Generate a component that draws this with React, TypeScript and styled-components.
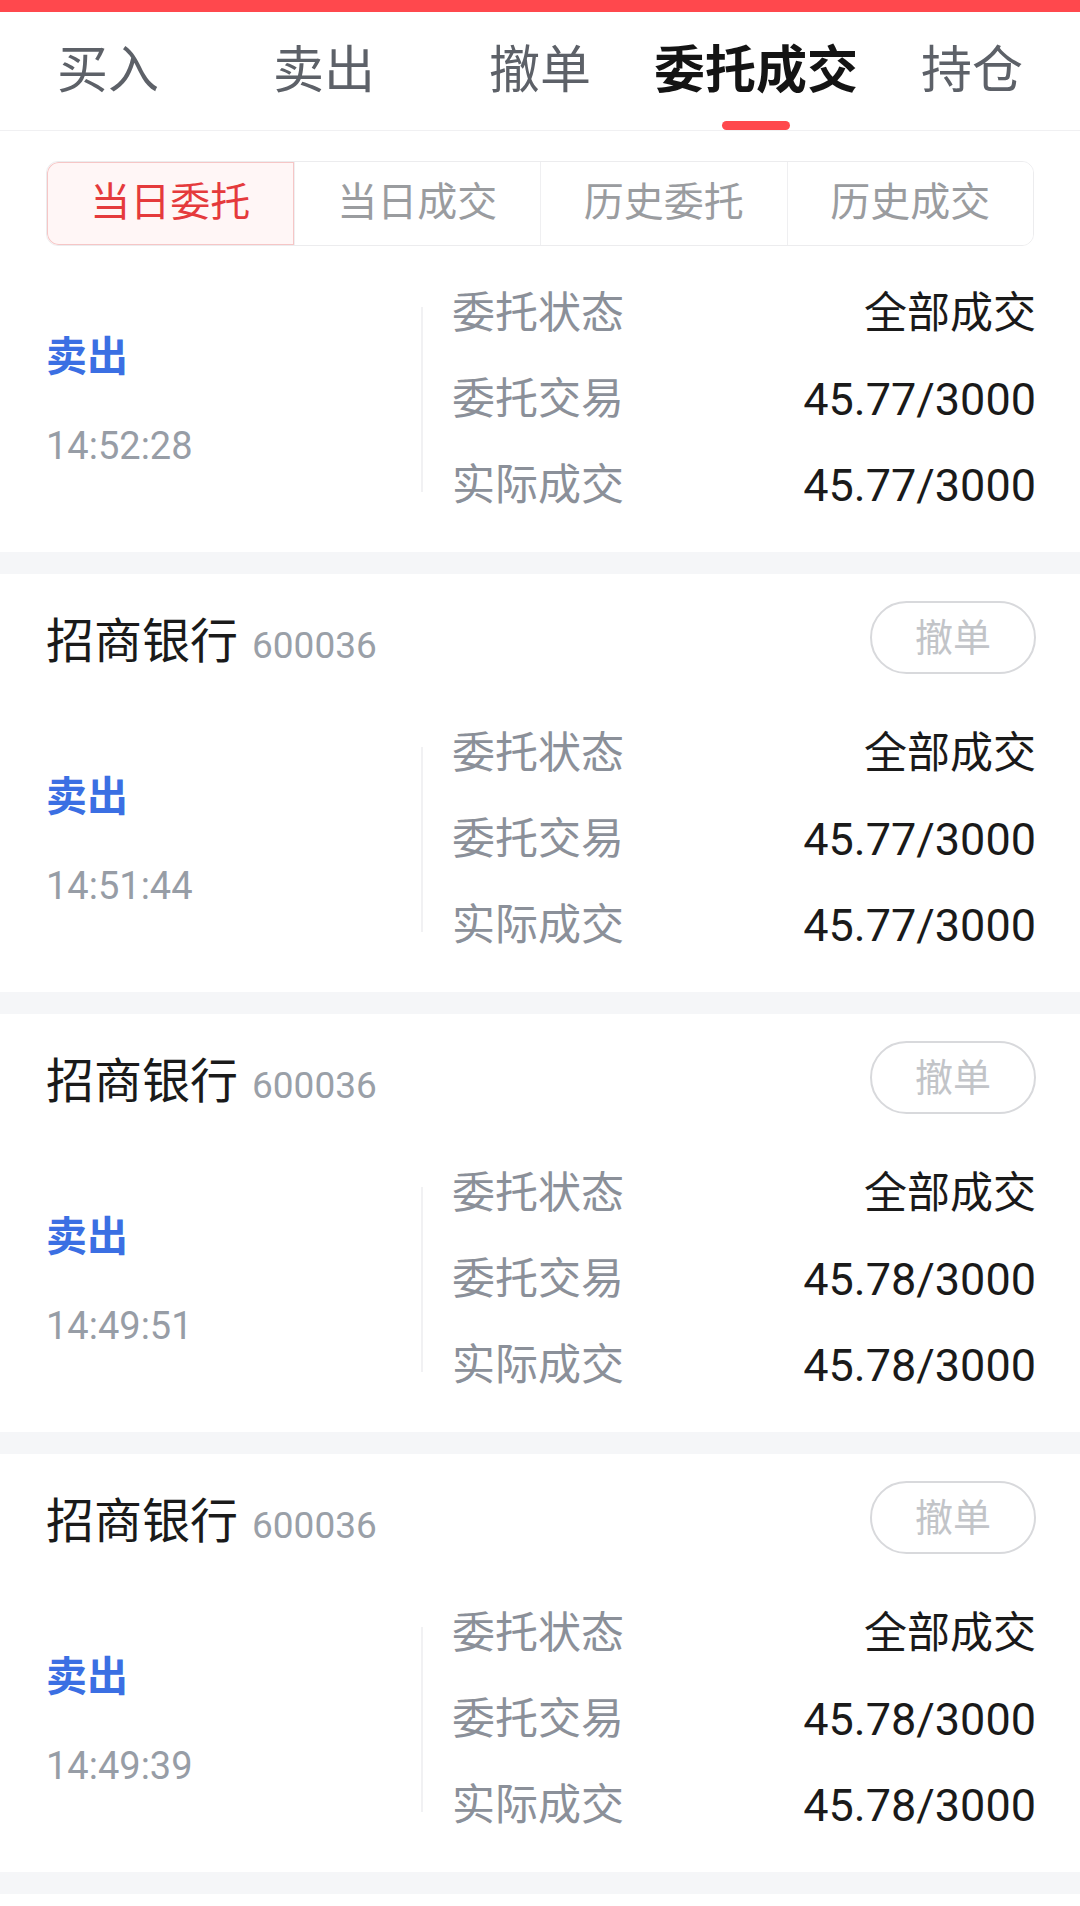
import React, { useState } from "react";
import styled, { createGlobalStyle } from "styled-components";

const GlobalStyle = createGlobalStyle`
  *, *::before, *::after {
    box-sizing: border-box;
  }
  html, body {
    margin: 0;
    padding: 0;
    background: #ffffff;
  }
  body {
    font-family: "Noto Sans CJK SC", Roboto, sans-serif;
    color: #1a1a1a;
    -webkit-font-smoothing: antialiased;
  }
`;

const Page = styled.div`
  width: 1080px;
  background: #f5f6f8;
  overflow: hidden;
`;

const TopStrip = styled.div`
  height: 12px;
  background: #ff484d;
`;

const TabBar = styled.div`
  display: grid;
  grid-template-columns: repeat(5, 1fr);
  height: 119px;
  background: #fff;
  border-bottom: 1px solid #f0f0f2;
`;

const Tab = styled.div<{ $active?: boolean }>`
  position: relative;
  display: flex;
  align-items: center;
  justify-content: center;
  padding-bottom: 10px;
  font-size: 51px;
  font-weight: ${(p) => (p.$active ? 600 : 400)};
  color: ${(p) => (p.$active ? "#141414" : "#5d6168")};
  cursor: pointer;
`;

const Indicator = styled.span`
  position: absolute;
  bottom: 0;
  left: 50%;
  width: 68px;
  height: 9px;
  margin-left: -34px;
  border-radius: 5px;
  background: #ff484d;
`;

const FilterWrap = styled.div`
  background: #fff;
  padding: 30px 46px 0;
`;

const Segmented = styled.div`
  display: grid;
  grid-template-columns: repeat(4, 1fr);
  height: 85px;
  border: 1px solid #ececee;
  border-radius: 12px;
  overflow: hidden;
`;

const Segment = styled.div<{ $active?: boolean }>`
  display: flex;
  align-items: center;
  justify-content: center;
  padding-bottom: 9px;
  font-size: 40px;
  color: ${(p) => (p.$active ? "#e53a3c" : "#9a9c9f")};
  background: ${(p) => (p.$active ? "#fff6f6" : "#fff")};
  border-left: 1px solid #efeff1;
  box-shadow: ${(p) => (p.$active ? "inset 0 0 0 1px #f6c6c6" : "none")};
  border-radius: ${(p) => (p.$active ? "12px 0 0 12px" : "0")};

  &:first-child {
    border-left: none;
  }
`;

const List = styled.div`
  display: flex;
  flex-direction: column;
  gap: 22px;
  padding-bottom: 22px;
`;

const ListEnd = styled.div`
  height: 40px;
  background: #fff;
`;

const Card = styled.div`
  background: #fff;
  padding: 24px 44px 24px 46px;
`;

const CardHead = styled.div`
  display: flex;
  align-items: center;
  justify-content: space-between;
  height: 86px;
  padding-bottom: 7px;
  margin-bottom: 26px;
`;

const StockName = styled.div`
  display: flex;
  align-items: baseline;
  gap: 14px;
  margin-bottom: 2px;
  font-size: 48px;
  color: #1a1a1a;
`;

const StockCode = styled.span`
  font-family: Roboto, sans-serif;
  font-size: 37px;
  color: #9aa0a8;
`;

const CancelButton = styled.button`
  width: 166px;
  height: 73px;
  border: 2px solid #d8d9dc;
  border-radius: 37px;
  background: #fff;
  font-family: "Noto Sans CJK SC", sans-serif;
  font-size: 38px;
  color: #c2c4c8;
  padding: 0 0 6px;
`;

const Body = styled.div`
  display: flex;
  height: 258px;
`;

const Side = styled.div`
  width: 375px;
  display: flex;
  flex-direction: column;
  justify-content: center;
`;

const Direction = styled.div`
  line-height: 86px;
  font-size: 41px;
  font-weight: 700;
  color: #3b6fe3;
`;

const Time = styled.div`
  line-height: 86px;
  margin-top: 7px;
  font-family: Roboto, sans-serif;
  font-size: 38px;
  color: #979da6;
`;

const Divider = styled.div`
  width: 2px;
  margin: 37px 0 36px;
  background: #f1f1f3;
`;

const Details = styled.div`
  flex: 1;
  padding-left: 29px;
  display: flex;
  flex-direction: column;
`;

const DetailRow = styled.div`
  height: 86px;
  display: flex;
  align-items: center;
  justify-content: space-between;
  padding-bottom: 9px;
`;

const Label = styled.span`
  font-size: 43px;
  color: #8b9099;
`;

const Value = styled.span<{ $numeric?: boolean }>`
  padding-top: ${(p) => (p.$numeric ? "10px" : "0")};
  font-family: Roboto, "Noto Sans CJK SC", sans-serif;
  font-size: ${(p) => (p.$numeric ? "45px" : "43px")};
  color: #1a1a1a;
`;

interface Order {
  id: number;
  name: string;
  code: string;
  side: string;
  time: string;
  status: string;
  order: string;
  filled: string;
}

const orders: Order[] = [
  { id: 1, name: "招商银行", code: "600036", side: "卖出", time: "14:52:28", status: "全部成交", order: "45.77/3000", filled: "45.77/3000" },
  { id: 2, name: "招商银行", code: "600036", side: "卖出", time: "14:51:44", status: "全部成交", order: "45.77/3000", filled: "45.77/3000" },
  { id: 3, name: "招商银行", code: "600036", side: "卖出", time: "14:49:51", status: "全部成交", order: "45.78/3000", filled: "45.78/3000" },
  { id: 4, name: "招商银行", code: "600036", side: "卖出", time: "14:49:39", status: "全部成交", order: "45.78/3000", filled: "45.78/3000" },
];

const tabs = ["买入", "卖出", "撤单", "委托成交", "持仓"];
const filters = ["当日委托", "当日成交", "历史委托", "历史成交"];

const OrderCard: React.FC<{ order: Order; showHead: boolean }> = ({ order, showHead }) => (
  <Card>
    {showHead && (
      <CardHead>
        <StockName>
          {order.name}
          <StockCode>{order.code}</StockCode>
        </StockName>
        <CancelButton>撤单</CancelButton>
      </CardHead>
    )}
    <Body>
      <Side>
        <Direction>{order.side}</Direction>
        <Time>{order.time}</Time>
      </Side>
      <Divider />
      <Details>
        <DetailRow>
          <Label>委托状态</Label>
          <Value>{order.status}</Value>
        </DetailRow>
        <DetailRow>
          <Label>委托交易</Label>
          <Value $numeric>{order.order}</Value>
        </DetailRow>
        <DetailRow>
          <Label>实际成交</Label>
          <Value $numeric>{order.filled}</Value>
        </DetailRow>
      </Details>
    </Body>
  </Card>
);

const App: React.FC = () => {
  const [tab, setTab] = useState(3);
  const [filter, setFilter] = useState(0);

  return (
    <>
      <GlobalStyle />
      <Page>
        <TopStrip />
        <TabBar>
          {tabs.map((t, i) => (
            <Tab key={t} $active={tab === i} onClick={() => setTab(i)}>
              {t}
              {tab === i && <Indicator />}
            </Tab>
          ))}
        </TabBar>
        <FilterWrap>
          <Segmented>
            {filters.map((f, i) => (
              <Segment key={f} $active={filter === i} onClick={() => setFilter(i)}>
                {f}
              </Segment>
            ))}
          </Segmented>
        </FilterWrap>
        <List>
          {orders.map((o, i) => (
            <OrderCard key={o.id} order={o} showHead={i > 0} />
          ))}
        </List>
        <ListEnd />
      </Page>
    </>
  );
};

export default App;
